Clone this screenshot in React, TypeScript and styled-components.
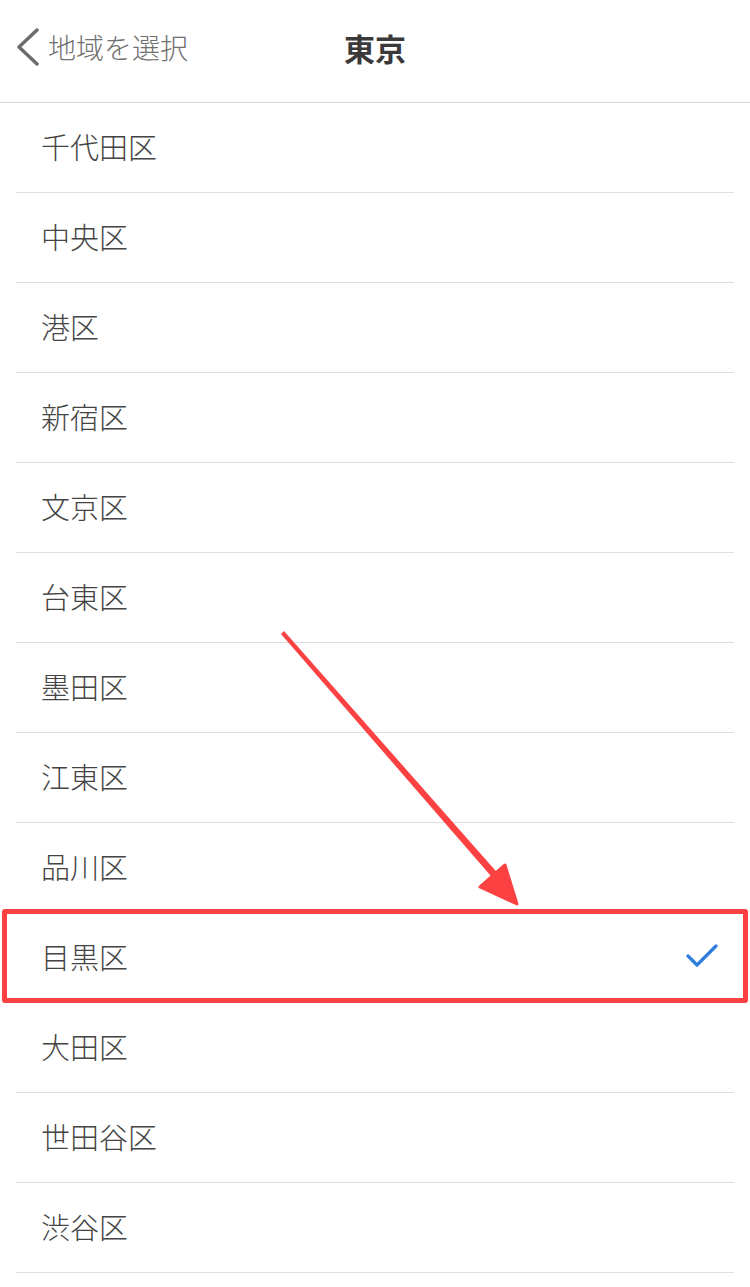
import styled, { createGlobalStyle } from "styled-components";

const GlobalStyle = createGlobalStyle`
  html, body {
    margin: 0;
    padding: 0;
    background: #fff;
    font-family: "Noto Sans CJK JP", "Noto Sans", sans-serif;
  }
`;

const wards = [
  "千代田区",
  "中央区",
  "港区",
  "新宿区",
  "文京区",
  "台東区",
  "墨田区",
  "江東区",
  "品川区",
  "目黒区",
  "大田区",
  "世田谷区",
  "渋谷区",
];

const selectedWard = "目黒区";

const Page = styled.div`
  position: relative;
  width: 750px;
  min-height: 1287px;
  overflow: hidden;
`;

const Header = styled.header`
  height: 103px;
  box-sizing: border-box;
  border-bottom: 1px solid #d6d6d6;
  display: grid;
  grid-template-columns: 1fr auto 1fr;
  align-items: center;
  padding: 0 16px 8px 16px;
`;

const BackButton = styled.button`
  display: flex;
  align-items: center;
  gap: 8px;
  padding: 0;
  border: none;
  background: none;
  color: #707070;
  font-family: inherit;
  font-size: 28px;
  font-weight: 300;
  cursor: pointer;
  justify-self: start;
`;

const Title = styled.h1`
  margin: 0;
  font-size: 31px;
  font-weight: 700;
  color: #3a3a3a;
`;

const List = styled.ul`
  list-style: none;
  margin: 0;
  padding: 0;
`;

const Row = styled.li<{ $selected?: boolean }>`
  position: relative;
  padding: 0 16px;

  ${(p) =>
    p.$selected &&
    `
    &::after {
      content: "";
      position: absolute;
      left: 2px;
      right: 2px;
      top: -4px;
      bottom: 0;
      border: 5px solid #fb4141;
      border-radius: 3px;
      pointer-events: none;
    }
  `}
`;

const Item = styled.div`
  height: 90px;
  box-sizing: border-box;
  border-bottom: 1px solid #dedede;
  display: flex;
  align-items: center;
  justify-content: space-between;
  padding: 0 16px 4px 25px;
  font-size: 29px;
  font-weight: 300;
  color: #444;
`;

const Arrow = styled.svg`
  position: absolute;
  left: 0;
  top: 0;
  pointer-events: none;
`;

const Chevron = () => (
  <svg width="24" height="38" viewBox="0 0 24 38">
    <path
      d="M21 2 L3 19 L21 36"
      fill="none"
      stroke="#6b6b6b"
      strokeWidth="3.4"
      strokeLinecap="round"
      strokeLinejoin="round"
    />
  </svg>
);

const Check = () => (
  <svg width="32" height="26" viewBox="0 0 32 26">
    <path
      d="M2 13 L11 22 L30 3"
      fill="none"
      stroke="#2e7de0"
      strokeWidth="3.2"
      strokeLinecap="round"
      strokeLinejoin="round"
    />
  </svg>
);

const App = () => {
  return (
    <Page>
      <GlobalStyle />
      <Header>
        <BackButton>
          <Chevron />
          地域を選択
        </BackButton>
        <Title>東京</Title>
        <span />
      </Header>
      <List>
        {wards.map((w) => (
          <Row key={w} $selected={w === selectedWard}>
            <Item>
              {w}
              {w === selectedWard ? <Check /> : null}
            </Item>
          </Row>
        ))}
      </List>
      {/* annotation arrow pointing at the selected row */}
      <Arrow width="750" height="1287" viewBox="0 0 750 1287">
        <polygon points="281,634 284,631 502,878 497,883" fill="#fb4141" />
        <polygon
          points="480,887 505,865 517,904"
          fill="#fb4141"
          stroke="#fb4141"
          strokeWidth="3"
          strokeLinejoin="round"
        />
      </Arrow>
    </Page>
  );
};

export default App;
